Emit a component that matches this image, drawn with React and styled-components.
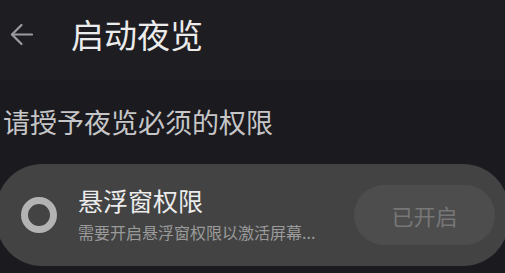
import styled, { createGlobalStyle } from 'styled-components'

const GlobalStyle = createGlobalStyle`
  html, body {
    margin: 0;
    padding: 0;
    background-color: #1b1a1f;
    font-family: 'Noto Sans CJK SC', 'Noto Sans', sans-serif;
    overflow: hidden;
  }
`

const Page = styled.div`
  width: 505px;
  height: 273px;
  display: flex;
  flex-direction: column;
  overflow: hidden;
`

const Header = styled.div`
  height: 80px;
  box-sizing: border-box;
  flex-shrink: 0;
  display: flex;
  align-items: center;
  padding: 0 0 11px 10px;
  background-color: #1e1d22;
`

const BackButton = styled.div`
  width: 23px;
  height: 23px;
  display: flex;
  align-items: center;
  justify-content: center;
  color: #9c9c9e;
`

const Title = styled.div`
  margin-left: 38px;
  font-size: 33px;
  line-height: 1;
  color: #ececec;
`

const SectionLabel = styled.div`
  margin: 28px 0 0 3px;
  font-size: 27px;
  line-height: 1;
  color: #c6c6c8;
`

const Card = styled.div`
  margin: 29px -4px 0 -4px;
  height: 102px;
  border-radius: 46px;
  background-color: #434343;
  display: flex;
  align-items: center;
  padding: 0 14px 0 25px;
`

const Ring = styled.div`
  width: 36px;
  height: 36px;
  box-sizing: border-box;
  border-radius: 50%;
  border: 7px solid #b3b3b3;
  flex-shrink: 0;
`

const Texts = styled.div`
  flex: 1;
  margin-left: 21px;
  display: flex;
  flex-direction: column;
  gap: 11px;
  margin-top: -2px;
`

const ItemTitle = styled.div`
  font-size: 25px;
  line-height: 1;
  color: #ececec;
`

const ItemDesc = styled.div`
  font-size: 16px;
  line-height: 1;
  color: #9b9b9b;
  white-space: nowrap;
`

const StatusButton = styled.div`
  width: 141px;
  height: 60px;
  border-radius: 30px;
  background-color: #4d4d4d;
  color: ${props => (props.done ? '#777777' : '#ececec')};
  font-size: 22px;
  display: flex;
  align-items: center;
  justify-content: center;
  flex-shrink: 0;
`

export default function App() {
  return (
    <Page>
      <GlobalStyle />
      <Header>
        <BackButton>
          <svg width="23" height="23" viewBox="0 0 23 23" fill="none" stroke="currentColor" strokeWidth="2.2" strokeLinecap="round" strokeLinejoin="round">
            <path d="M22 11.5H2" />
            <path d="M11.5 2L2 11.5L11.5 21" />
          </svg>
        </BackButton>
        <Title>启动夜览</Title>
      </Header>
      <SectionLabel>请授予夜览必须的权限</SectionLabel>
      <Card>
        <Ring />
        <Texts>
          <ItemTitle>悬浮窗权限</ItemTitle>
          <ItemDesc>需要开启悬浮窗权限以激活屏幕...</ItemDesc>
        </Texts>
        <StatusButton done>已开启</StatusButton>
      </Card>
    </Page>
  )
}
